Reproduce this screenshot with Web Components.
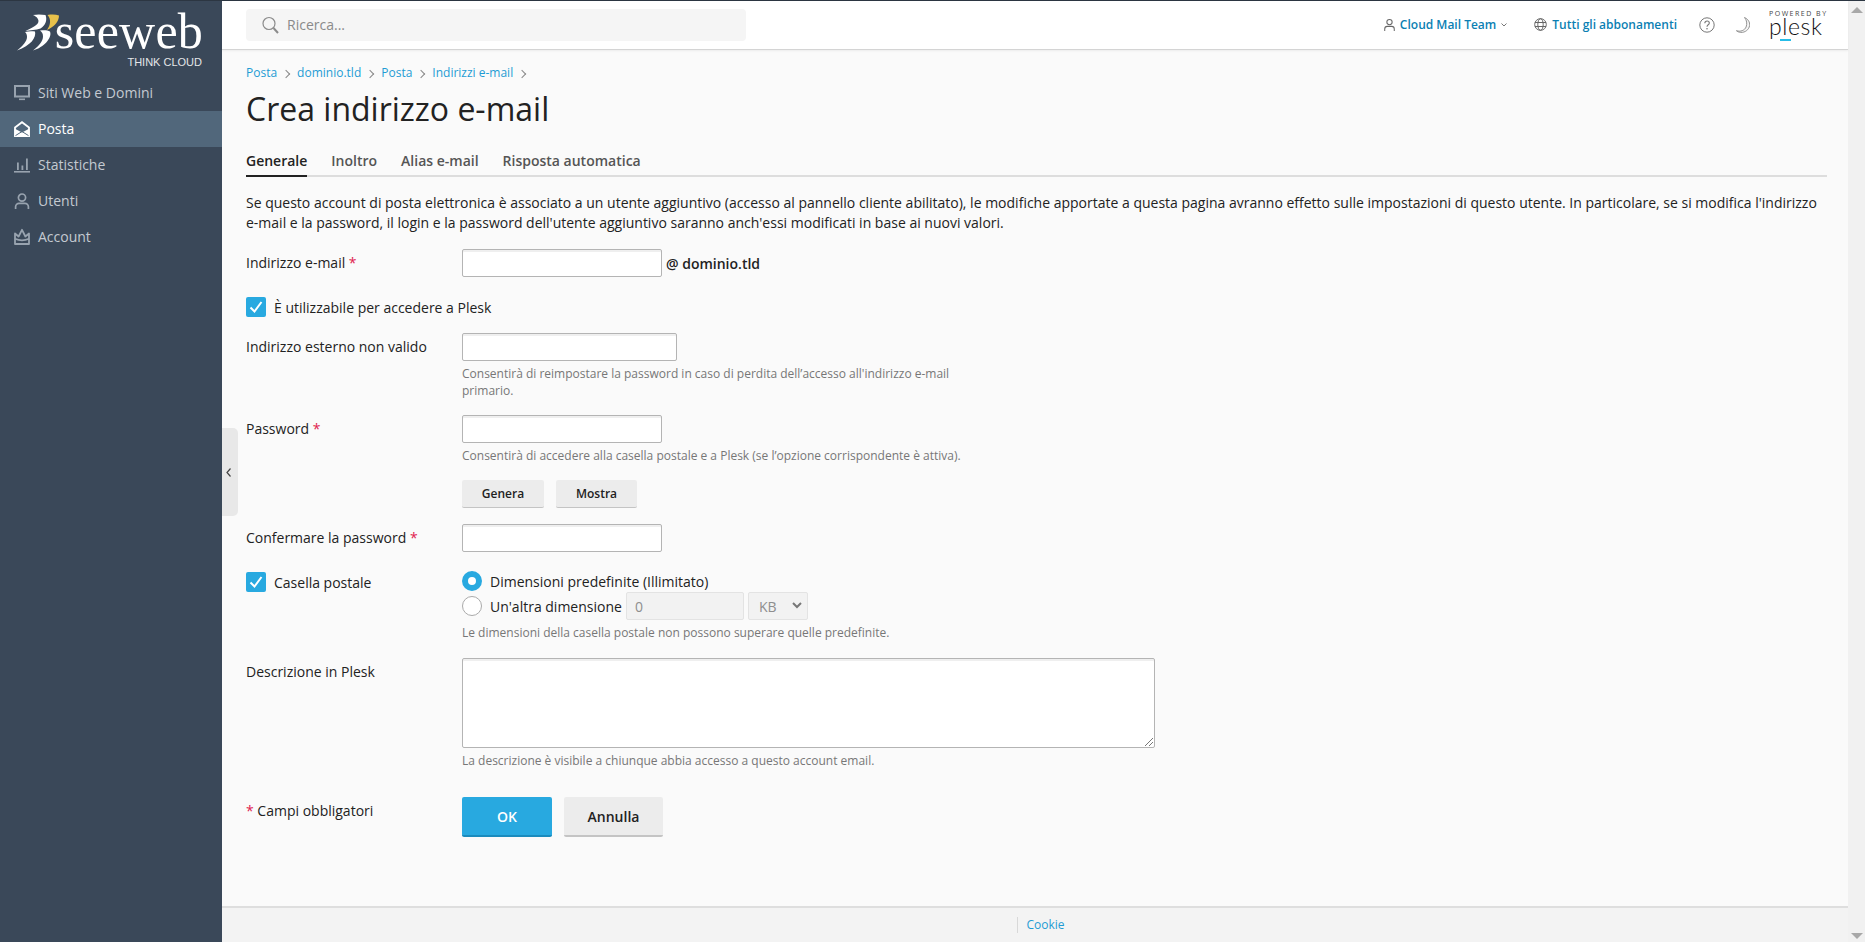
<!DOCTYPE html>
<html lang="it"><head><meta charset="utf-8"><title>Crea indirizzo e-mail</title>
<style>
html,body{margin:0;height:100%;overflow:hidden}
body{font:14px/20px "Open Sans",sans-serif;color:#222;background:#fafafa}
</style></head><body>
<app-shell>
  <side-bar slot="side">
    <brand-logo></brand-logo>
    <nav-item icon="monitor">Siti Web e Domini</nav-item>
    <nav-item icon="mail" active>Posta</nav-item>
    <nav-item icon="chart">Statistiche</nav-item>
    <nav-item icon="user">Utenti</nav-item>
    <nav-item icon="crown">Account</nav-item>
  </side-bar>
  <top-bar slot="top"></top-bar>
  <collapse-handle slot="handle"></collapse-handle>
  <bread-crumbs><a>Posta</a><a>dominio.tld</a><a>Posta</a><a>Indirizzi e-mail</a></bread-crumbs>
  <page-title>Crea indirizzo e-mail</page-title>
  <page-tabs><span class="on" data-on>Generale</span><span>Inoltro</span><span>Alias e-mail</span><span>Risposta automatica</span></page-tabs>
  <intro-text>Se questo account di posta elettronica è associato a un utente aggiuntivo (accesso al pannello cliente abilitato), le modifiche apportate a questa pagina avranno effetto sulle impostazioni di questo utente. In particolare, se si modifica l'indirizzo e-mail e la password, il login e la password dell'utente aggiuntivo saranno anch'essi modificati in base ai nuovi valori.</intro-text>

  <form-row label="Indirizzo e-mail" required gap="16">
    <div style="display:flex;align-items:center;gap:4px"><text-field w="200"></text-field><b style="font-weight:600;color:#222;position:relative;top:1px">@ dominio.tld</b></div>
  </form-row>
  <check-row gap="20">È utilizzabile per accedere a Plesk</check-row>
  <form-row label="Indirizzo esterno non valido" gap="16">
    <text-field w="215"></text-field>
    <form-hint style="width:500px;margin-top:4px">Consentirà di reimpostare la password in caso di perdita dell’accesso all'indirizzo e-mail primario.</form-hint>
  </form-row>
  <form-row label="Password" required gap="16">
    <text-field w="200"></text-field>
    <form-hint style="margin-top:4px">Consentirà di accedere alla casella postale e a Plesk (se l’opzione corrispondente è attiva).</form-hint>
    <div style="display:flex;gap:12px;margin-top:16px"><ui-button small w="82">Genera</ui-button><ui-button small w="81">Mostra</ui-button></div>
  </form-row>
  <form-row label="Confermare la password" required gap="16"><text-field w="200"></text-field></form-row>
  <mailbox-row gap="19">
    <span slot="label">Casella postale</span>
    <radio-option checked style="height:21px">Dimensioni predefinite (Illimitato)</radio-option>
    <radio-option style="height:28px">Un'altra dimensione
      <text-field slot="after" w="118" disabled value="0"></text-field>
      <unit-select slot="after"></unit-select>
    </radio-option>
    <form-hint style="margin-top:4px">Le dimensioni della casella postale non possono superare quelle predefinite.</form-hint>
  </mailbox-row>
  <form-row label="Descrizione in Plesk" gap="17">
    <text-area-box></text-area-box>
    <form-hint style="margin-top:4px">La descrizione è visibile a chiunque abbia accesso a questo account email.</form-hint>
  </form-row>
  <form-row label="Campi obbligatori" leadstar gap="28">
    <div style="display:flex;gap:12px"><ui-button primary w="90">OK</ui-button><ui-button w="99">Annulla</ui-button></div>
  </form-row>
  <page-footer slot="foot"></page-footer>
</app-shell>
<script>
function el(name,css,html,init){
  customElements.define(name,class extends HTMLElement{
    constructor(){super();const s=this.attachShadow({mode:'open'});
      s.innerHTML='<style>'+css+'</style>'+(typeof html==='function'?html(this):html);}
    connectedCallback(){
      const g=this.getAttribute('gap');if(g)this.style.marginTop=g+'px';
      if(init)init(this,this.shadowRoot);}
  });
}
const icons={
 monitor:'<rect x="1" y="1" width="14" height="10.5" fill="none" stroke="currentColor" stroke-width="2"/><rect x="5" y="13.5" width="6" height="1.6" fill="currentColor"/>',
 mail:'<path d="M1 6.500 8 1.200 15 6.500V15H1Z" fill="none" stroke="currentColor" stroke-width="1.800"/><path d="M.500 7.500 8 11.600 15.500 7.500V15.800H.500Z" fill="currentColor"/><path d="M1.500 14.600 8 10.500l6.500 4.100" fill="none" stroke="#51677b" stroke-width="1"/>',
 chart:'<rect x="0" y="14" width="16" height="1.600" fill="currentColor"/><rect x="3" y="5.500" width="1.800" height="7.500" fill="currentColor"/><rect x="7.500" y="8.500" width="1.800" height="4.500" fill="currentColor"/><rect x="12" y="1.500" width="1.800" height="11.500" fill="currentColor"/>',
 user:'<circle cx="8" cy="4.600" r="3.600" fill="none" stroke="currentColor" stroke-width="1.700"/><path d="M1.600 16v-2.200c0-2 1.600-3.400 3.400-3.400h6c1.800 0 3.400 1.400 3.400 3.400V16" fill="none" stroke="currentColor" stroke-width="1.700"/>',
 crown:'<path d="M1 4.500 4.600 7.500 8 .800 11.400 7.500 15 4.500V15H1Z" fill="none" stroke="currentColor" stroke-width="1.800" stroke-linejoin="round"/><path d="M1 9.800c4.500 2 9.500 2 14 0" fill="none" stroke="currentColor" stroke-width="1.800"/>'
};
el('app-shell',`:host{display:grid;grid-template-columns:222px 1fr 17px;grid-template-rows:1px 49px 1fr 36px;height:942px;background:#fafafa}
.line{grid-column:1/4;background:#2c3642}
.side{grid-column:1;grid-row:2/5;background:#3a4859}
.topb{grid-column:2;grid-row:2}
.main{grid-column:2;grid-row:3;position:relative;padding:13px 21px 0 24px;min-width:0;overflow:hidden}
.foot{grid-column:2;grid-row:4}
.sb{grid-column:3;grid-row:2/5;background:#f1f1f1;display:flex;flex-direction:column;justify-content:space-between;align-items:center;padding:6px 0 3px}
.sb i{width:0;height:0;border-left:6px solid transparent;border-right:6px solid transparent}
.sb i:first-child{border-bottom:6px solid #a8a8a8}.sb i:last-child{border-top:6px solid #a8a8a8}
::slotted([slot=handle]){position:absolute;left:0;top:378px}`,
`<div class="line"></div><div class="side"><slot name="side"></slot></div><div class="topb"><slot name="top"></slot></div>
<div class="main"><slot name="handle"></slot><slot></slot></div><div class="foot"><slot name="foot"></slot></div><div class="sb"><i></i><i></i></div>`);
el('side-bar',`:host{display:block}`,`<slot></slot>`);
el('brand-logo',`:host{display:flex;height:74px;box-sizing:border-box;padding:12px 0 0 17px;color:#fff}
svg{flex:none;display:block;width:42px;height:38px}
.t{margin-left:-3px;display:flex;flex-direction:column;align-items:flex-end;width:146px}
.s{font:50px/36px "Liberation Serif",serif;letter-spacing:.2px;height:36px;white-space:nowrap;margin-right:-1px}
.c{font:11px/14px "Liberation Sans",sans-serif;color:#e4e6e8;margin-top:6px}`,
`<svg viewBox="17 12 42 38" aria-hidden="true">
<path fill="#fff" d="M33 14C38 13 42 13.500 45.500 14 47.500 19 45.500 24.500 40.500 27.500 36 29 30 29 25.500 30 31 27 36.500 25 38 22 39.500 19 37.500 16 33 14Z"/>
<path fill="#e8c14b" d="M47.500 14C52 13.300 56 13.500 59 14.500 59 20.500 54 26 47 29 50.500 24 51.500 18.500 47.500 14Z"/>
<path fill="#fff" d="M25 31C28.500 30 32 30 35 30.500 36.500 36.500 31 44.500 17 49.500 23 45 27 40 27 36 27 33.500 26.500 32.500 25 31Z"/>
<path fill="#fff" d="M40 29.500C44 29 47.500 29 50 30.500 52.500 36.500 44 46.500 33 49.500 39 45 43 40 43 35.500 43 32.500 42 31 40 29.500Z"/>
</svg>
<div class="t"><div class="s">seeweb</div><div class="c">THINK CLOUD</div></div>`);
el('nav-item',`:host{display:flex;align-items:center;height:36px;padding-left:14px;color:#c4cad1;gap:8px}
:host([active]){background:#51677b;color:#fff}
svg{width:16px;height:16px;flex:none;color:#98a3af;overflow:visible}
:host([active]) svg{color:#fff}`,
h=>`<svg viewBox="0 0 16 16" aria-hidden="true">${icons[h.getAttribute('icon')]}</svg><slot></slot>`);
el('top-bar',`:host{display:flex;align-items:center;height:49px;box-sizing:border-box;background:#fff;border-bottom:1px solid #d4d4d4;box-shadow:0 1px 2px rgba(0,0,0,.06);padding:0 22px 1px 24px;position:relative;font-size:12px}
.search{width:500px;height:32px;box-sizing:border-box;background:#f5f5f5;border-radius:4px;display:flex;align-items:center;padding-left:16px;gap:8px;color:#8a8a8a;font-size:14px}
.r{margin-left:auto;display:flex;align-items:center}
a{color:#0b7fb3;font-weight:600}
svg{display:block;flex:none}
.ch{margin-left:5px}
.logo{margin-left:19px;width:57px;color:#222;height:44px;display:flex;flex-direction:column;align-items:flex-start}
.p{font:7px/9px "Open Sans",sans-serif;letter-spacing:1.5px;color:#444;white-space:nowrap;margin-top:6px}
.k{font:300 23px/20px "Lato","Open Sans",sans-serif;letter-spacing:.6px;color:#111;white-space:nowrap;margin-top:-2px;position:relative}
.k i{position:absolute;left:11px;bottom:-5px;width:11px;height:2px;background:#26bde8}`,
`<div class="search"><svg width="17" height="18" viewBox="0 0 17 18" fill="none" stroke="#8b8b8b"><circle cx="7" cy="7.500" r="6" stroke-width="1.200"/><path d="M11.500 12l4.500 5" stroke-width="2"/></svg><span>Ricerca...</span></div>
<div class="r">
<svg width="11" height="14" viewBox="0 0 12 14" fill="none" stroke="#666" stroke-width="1.100"><circle cx="6" cy="3.800" r="2.900"/><path d="M.8 13.500v-2.200c0-1.700 1.300-2.800 2.800-2.800h4.800c1.500 0 2.800 1.100 2.800 2.800v2.200"/></svg>
<a style="margin-left:5px">Cloud Mail Team</a>
<svg class="ch" width="6" height="4" viewBox="0 0 6 4" fill="none" stroke="#777"><path d="M.5.500 3 3 5.500.500"/></svg>
<svg style="margin-left:27px" width="13" height="13" viewBox="0 0 13 13" fill="none" stroke="#666" stroke-width="1"><circle cx="6.500" cy="6.500" r="5.800"/><ellipse cx="6.500" cy="6.500" rx="2.700" ry="5.800"/><path d="M1 4.500h11M1 8.500h11"/></svg>
<a style="margin-left:5px">Tutti gli abbonamenti</a>
<svg style="margin-left:22px" width="16" height="16" viewBox="0 0 16 16" fill="none" stroke="#777"><circle cx="8" cy="8" r="7.200"/><path d="M5.800 6.200c.1-1.400 1-2.200 2.300-2.200s2.200.8 2.200 2c0 1.800-2.300 1.800-2.300 3.700" stroke-width="1.100"/><circle cx="8" cy="11.800" r=".8" fill="#777" stroke="none"/></svg>
<svg style="margin-left:21px" width="14" height="16" viewBox="0 0 14 16"><path d="M8.500.500C12 2 14 5 13.600 8.500 13 12.700 9 15.700 4.800 15.400 3 15.300 1.500 14.700.4 13.700c4 1.300 8.200-.2 9.700-3.700C11.300 7 10.800 3 8.500.500Z" fill="#f4f4f4" stroke="#888" stroke-width=".9"/></svg>
<div class="logo"><span class="p">POWERED BY</span><span class="k">plesk<i></i></span></div>
</div>`);
el('collapse-handle',`:host{display:flex;align-items:center;justify-content:center;width:16px;height:88px;box-sizing:border-box;padding-right:3px;background:#e8e8e8;border-radius:0 5px 5px 0}
svg{display:block}`,`<svg width="5" height="9" viewBox="0 0 5 9" fill="none" stroke="#444" stroke-width="1.200"><path d="M4.500.500 1 4.500l3.500 4"/></svg>`);
el('bread-crumbs',`:host{display:flex;align-items:center;height:20px;font-size:12px;color:#1f9cd4}
slot{display:contents}::slotted(a){display:inline-flex;align-items:center;color:#1f9cd4}
::slotted(a)::after{content:"";width:5px;height:5px;border-top:1px solid #888;border-right:1px solid #888;transform:rotate(45deg);margin:1px 8px 0 6px}`,`<slot></slot>`);
el('page-title',`:host{display:block;font-size:32px;line-height:40px;margin-top:6px;color:#222;font-weight:400}`,`<slot></slot>`);
el('page-tabs',`:host{display:flex;gap:24px;margin-top:22px;height:26px;box-sizing:border-box;border-bottom:2px solid #ddd;font-weight:600;color:#555}
::slotted(span){height:26px;box-sizing:border-box;display:block}
::slotted([data-on]){color:#222;border-bottom:2px solid #222}`,`<slot></slot>`);
el('intro-text',`:host{display:block;margin-top:16px;color:#222}`,`<slot></slot>`);
el('form-row',`:host{display:grid;grid-template-columns:216px 1fr;color:#222}
.l{padding-top:4px}.st{color:#e0224f}`,
h=>{const r=h.hasAttribute('required'),lead=h.hasAttribute('leadstar'),t=h.getAttribute('label');
return `<div class="l">${lead?'<span class="st">*</span> ':''}${t}${r?' <span class="st">*</span>':''}</div><div><slot></slot></div>`});
el('check-box',`:host{display:block;width:20px;height:20px;border-radius:2px;background:#28a9e0;flex:none}
svg{display:block}`,`<svg width="20" height="20" viewBox="0 0 20 20" fill="none" stroke="#fff" stroke-width="2"><path d="M4.500 10.500l4 4L15.500 5"/></svg>`);
el('check-row',`:host{display:flex;align-items:center;gap:8px;color:#222;height:20px;line-height:20px}
span{padding-top:1px}`,`<check-box></check-box><span><slot></slot></span>`);
el('mailbox-row',`:host{display:grid;grid-template-columns:216px 1fr;color:#222}
.l{display:flex;gap:8px;padding-top:1px;align-items:flex-start}`,`<div class="l"><check-box></check-box><span style="line-height:22px"><slot name="label"></slot></span></div><div><slot></slot></div>`);
el('radio-option',`:host{display:flex;align-items:flex-start;color:#222;white-space:nowrap}
.r{width:20px;height:20px;box-sizing:border-box;border-radius:50%;background:#fff;border:1px solid #aaa;margin-right:8px;flex:none;margin-top:4px}
:host([checked]) .r{border:6px solid #28a9e0;margin-top:0}
.t{line-height:20px;padding-top:5px}
:host([checked]) .t{padding-top:1px}
.a{display:flex;gap:4px;margin-left:4px}`,`<span class="r"></span><span class="t"><slot></slot></span><span class="a"><slot name="after"></slot></span>`);
el('text-field',`:host{display:block;height:28px}
input{display:block;box-sizing:border-box;height:28px;width:100%;border:1px solid #b4b4b4;border-radius:2px;background:#fff;box-shadow:inset 0 2px 0 #efefef;padding:0 8px;font:14px "Open Sans",sans-serif;outline:0}
input:disabled{background:#f2f2f2;border-color:#e3e3e3;color:#8e8e8e;box-shadow:none}`,
h=>`<input style="width:${h.getAttribute('w')}px" ${h.hasAttribute('disabled')?'disabled':''} value="${h.getAttribute('value')||''}">`);
el('unit-select',`:host{width:60px;height:28px;box-sizing:border-box;border:1px solid #e3e3e3;border-radius:2px;background:#f2f2f2;color:#8e8e8e;display:flex;align-items:center;justify-content:space-between;padding:2px 5px 0 10px;font-size:14px}
svg{display:block;margin-top:-4px}`,`<span>KB</span><svg width="10" height="7" viewBox="0 0 10 7" fill="none" stroke="#777" stroke-width="2"><path d="M1 1l4 4 4-4"/></svg>`);
el('text-area-box',`:host{display:block;width:693px;height:90px;box-sizing:border-box;border:1px solid #b4b4b4;border-radius:2px;background:#fff;box-shadow:inset 0 2px 0 #efefef;position:relative}
svg{position:absolute;right:1px;bottom:1px}`,`<svg width="8" height="8" viewBox="0 0 8 8" stroke="#777"><path d="M8 0 0 8M8 4 4 8"/></svg>`);
el('form-hint',`:host{display:block;font-size:12px;line-height:17px;color:#777;margin-top:3px}`,`<slot></slot>`);
el('ui-button',`:host{display:flex;align-items:center;justify-content:center;box-sizing:border-box;height:40px;padding-top:2px;background:#ececec;border-bottom:2px solid #c4c4c4;border-radius:2px;font-weight:600;color:#222;font-size:14px}
:host([small]){height:28px;font-size:12px;border-bottom-width:1px;padding-top:0}
:host([primary]){background:#28a9e0;border-bottom-color:#1a8bbd;color:#fff}`,
h=>{h.style.width=h.getAttribute('w')+'px';return `<slot></slot>`});
el('page-footer',`:host{display:flex;align-items:center;justify-content:center;height:36px;box-sizing:border-box;background:#f3f3f3;border-top:2px solid #dedede;font-size:12px;color:#1f9cd4}
.d{width:1px;height:16px;background:#d8d8d8;margin-right:8px;margin-left:12px}`,`<span class="d"></span><span>Cookie</span>`);
</script>
</body></html>
